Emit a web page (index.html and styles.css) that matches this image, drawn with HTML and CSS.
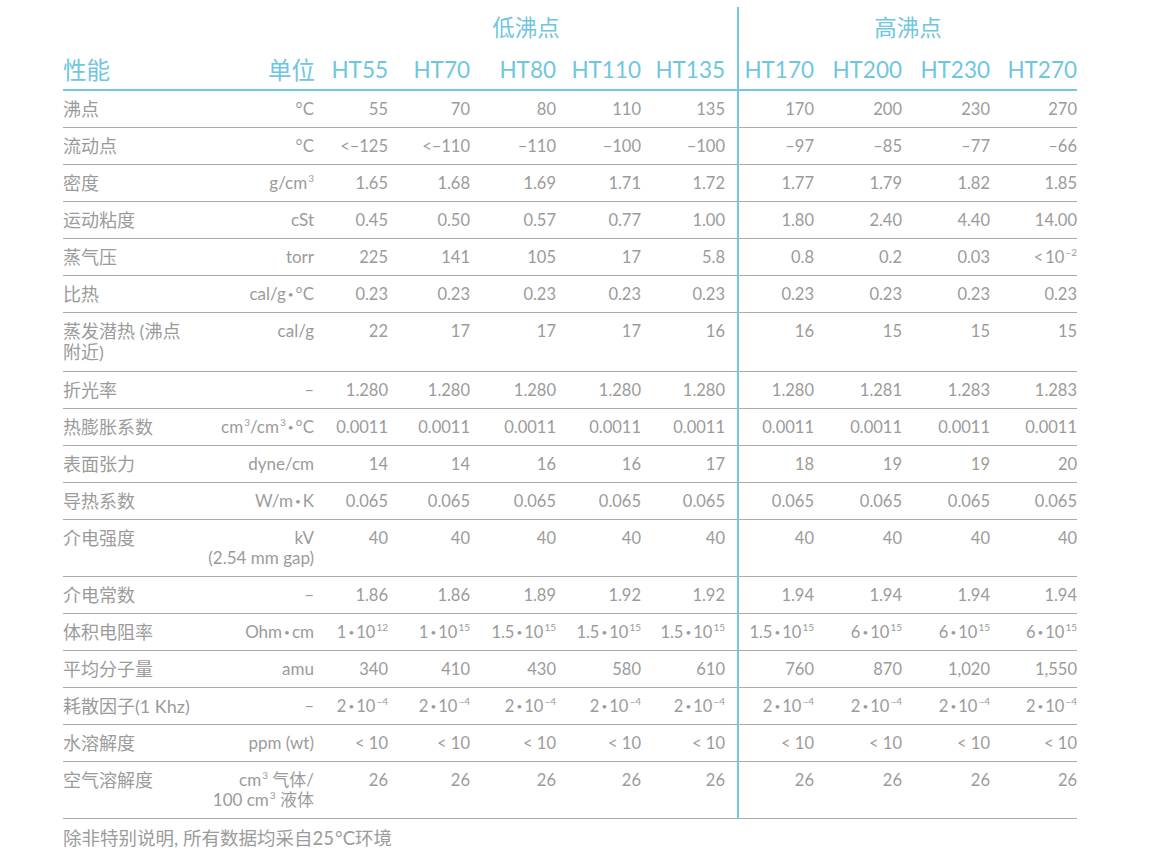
FILE: index.html
```html
<!DOCTYPE html>
<html lang="zh-CN">
<head>
<meta charset="utf-8">
<title>性能</title>
<link rel="stylesheet" href="styles.css">
</head>
<body>
<div class="page">
<table class="spec">
  <colgroup>
    <col class="c-prop"><col class="c-unit">
    <col class="c-55"><col class="c-70"><col class="c-80"><col class="c-110"><col class="c-135">
    <col class="c-170"><col class="c-200"><col class="c-230"><col class="c-270">
  </colgroup>
  <thead>
    <tr class="group-row">
      <th></th><th></th>
      <th colspan="5" class="group">低沸点</th>
      <th colspan="4" class="group hi">高沸点</th>
    </tr>
    <tr class="head-row">
      <th class="prop">性能</th>
      <th class="unit">单位</th>
      <th>HT55</th><th>HT70</th><th>HT80</th><th>HT110</th><th class="last-lo">HT135</th>
      <th class="hi">HT170</th><th>HT200</th><th>HT230</th><th>HT270</th>
    </tr>
  </thead>
  <tbody>
    <tr><td class="prop">沸点</td><td class="unit">°C</td><td>55</td><td>70</td><td>80</td><td>110</td><td class="last-lo">135</td><td class="hi">170</td><td>200</td><td>230</td><td>270</td></tr>
    <tr><td class="prop">流动点</td><td class="unit">°C</td><td>&lt;–125</td><td>&lt;–110</td><td>–110</td><td>–100</td><td class="last-lo">–100</td><td class="hi">–97</td><td>–85</td><td>–77</td><td>–66</td></tr>
    <tr><td class="prop">密度</td><td class="unit">g/cm<sup>3</sup></td><td>1.65</td><td>1.68</td><td>1.69</td><td>1.71</td><td class="last-lo">1.72</td><td class="hi">1.77</td><td>1.79</td><td>1.82</td><td>1.85</td></tr>
    <tr><td class="prop">运动粘度</td><td class="unit">cSt</td><td>0.45</td><td>0.50</td><td>0.57</td><td>0.77</td><td class="last-lo">1.00</td><td class="hi">1.80</td><td>2.40</td><td>4.40</td><td>14.00</td></tr>
    <tr><td class="prop">蒸气压</td><td class="unit">torr</td><td>225</td><td>141</td><td>105</td><td>17</td><td class="last-lo">5.8</td><td class="hi">0.8</td><td>0.2</td><td>0.03</td><td>&lt;&#8201;10<sup>–2</sup></td></tr>
    <tr><td class="prop">比热</td><td class="unit">cal/g<span class="dot">•</span>°C</td><td>0.23</td><td>0.23</td><td>0.23</td><td>0.23</td><td class="last-lo">0.23</td><td class="hi">0.23</td><td>0.23</td><td>0.23</td><td>0.23</td></tr>
    <tr class="tall"><td class="prop">蒸发潜热 (沸点<br>附近)</td><td class="unit">cal/g</td><td>22</td><td>17</td><td>17</td><td>17</td><td class="last-lo">16</td><td class="hi">16</td><td>15</td><td>15</td><td>15</td></tr>
    <tr><td class="prop">折光率</td><td class="unit">–</td><td>1.280</td><td>1.280</td><td>1.280</td><td>1.280</td><td class="last-lo">1.280</td><td class="hi">1.280</td><td>1.281</td><td>1.283</td><td>1.283</td></tr>
    <tr><td class="prop">热膨胀系数</td><td class="unit">cm<sup>3</sup>/cm<sup>3</sup><span class="dot">•</span>°C</td><td>0.0011</td><td>0.0011</td><td>0.0011</td><td>0.0011</td><td class="last-lo">0.0011</td><td class="hi">0.0011</td><td>0.0011</td><td>0.0011</td><td>0.0011</td></tr>
    <tr><td class="prop">表面张力</td><td class="unit">dyne/cm</td><td>14</td><td>14</td><td>16</td><td>16</td><td class="last-lo">17</td><td class="hi">18</td><td>19</td><td>19</td><td>20</td></tr>
    <tr><td class="prop">导热系数</td><td class="unit">W/m<span class="dot">•</span>K</td><td>0.065</td><td>0.065</td><td>0.065</td><td>0.065</td><td class="last-lo">0.065</td><td class="hi">0.065</td><td>0.065</td><td>0.065</td><td>0.065</td></tr>
    <tr><td class="prop">介电强度</td><td class="unit">kV<br>(2.54 mm gap)</td><td>40</td><td>40</td><td>40</td><td>40</td><td class="last-lo">40</td><td class="hi">40</td><td>40</td><td>40</td><td>40</td></tr>
    <tr><td class="prop">介电常数</td><td class="unit">–</td><td>1.86</td><td>1.86</td><td>1.89</td><td>1.92</td><td class="last-lo">1.92</td><td class="hi">1.94</td><td>1.94</td><td>1.94</td><td>1.94</td></tr>
    <tr><td class="prop">体积电阻率</td><td class="unit">Ohm<span class="dot">•</span>cm</td><td>1<span class="dot">•</span>10<sup>12</sup></td><td>1<span class="dot">•</span>10<sup>15</sup></td><td>1.5<span class="dot">•</span>10<sup>15</sup></td><td>1.5<span class="dot">•</span>10<sup>15</sup></td><td class="last-lo">1.5<span class="dot">•</span>10<sup>15</sup></td><td class="hi">1.5<span class="dot">•</span>10<sup>15</sup></td><td>6<span class="dot">•</span>10<sup>15</sup></td><td>6<span class="dot">•</span>10<sup>15</sup></td><td>6<span class="dot">•</span>10<sup>15</sup></td></tr>
    <tr><td class="prop">平均分子量</td><td class="unit">amu</td><td>340</td><td>410</td><td>430</td><td>580</td><td class="last-lo">610</td><td class="hi">760</td><td>870</td><td>1,020</td><td>1,550</td></tr>
    <tr><td class="prop">耗散因子(1 Khz)</td><td class="unit">–</td><td>2<span class="dot">•</span>10<sup>–4</sup></td><td>2<span class="dot">•</span>10<sup>–4</sup></td><td>2<span class="dot">•</span>10<sup>–4</sup></td><td>2<span class="dot">•</span>10<sup>–4</sup></td><td class="last-lo">2<span class="dot">•</span>10<sup>–4</sup></td><td class="hi">2<span class="dot">•</span>10<sup>–4</sup></td><td>2<span class="dot">•</span>10<sup>–4</sup></td><td>2<span class="dot">•</span>10<sup>–4</sup></td><td>2<span class="dot">•</span>10<sup>–4</sup></td></tr>
    <tr><td class="prop">水溶解度</td><td class="unit">ppm (wt)</td><td>&lt; 10</td><td>&lt; 10</td><td>&lt; 10</td><td>&lt; 10</td><td class="last-lo">&lt; 10</td><td class="hi">&lt; 10</td><td>&lt; 10</td><td>&lt; 10</td><td>&lt; 10</td></tr>
    <tr class="tall"><td class="prop">空气溶解度</td><td class="unit">cm<sup>3</sup> 气体/<br>100 cm<sup>3</sup> 液体</td><td>26</td><td>26</td><td>26</td><td>26</td><td class="last-lo">26</td><td class="hi">26</td><td>26</td><td>26</td><td>26</td></tr>
  </tbody>
</table>
<p class="note">除非特别说明, 所有数据均采自25&#8202;°C环境</p>
</div>
</body>
</html>
```

FILE: styles.css
```css
html, body {
  margin: 0;
  padding: 0;
  background: #ffffff;
}

body {
  font-family: "Lato", "Noto Sans CJK SC", sans-serif;
  color: #9b9b9b;
  font-size: 16.5px;
}

.page {
  padding: 7px 0 0 63px;
}

.spec {
  border-collapse: collapse;
  table-layout: fixed;
  width: 1014px;
}

.c-prop { width: 139px; }
.c-unit { width: 113px; }
.c-55 { width: 73px; }
.c-70 { width: 82px; }
.c-80 { width: 86px; }
.c-110 { width: 85px; }
.c-135 { width: 97px; }
.c-170 { width: 76px; }
.c-200 { width: 88px; }
.c-230 { width: 88px; }
.c-270 { width: 87px; }

.spec th {
  font-weight: 400;
  color: #6fc6df;
  padding: 0;
  text-align: right;
  white-space: nowrap;
}

.group-row th {
  font-size: 22.5px;
  line-height: 28px;
  padding: 7px 0;
}

.group-row th.group {
  text-align: center;
}

.head-row th {
  font-size: 22.5px;
  line-height: 28px;
  padding: 7px 0 5px;
  border-bottom: 2px solid #74c8e1;
}

.head-row th.prop,
.head-row th.unit {
  font-size: 23.5px;
}

.head-row th.prop {
  text-align: left;
}

.spec td {
  padding: 8px 0 8px;
  line-height: 20px;
  text-align: right;
  vertical-align: top;
  border-bottom: 1px solid #ababab;
  white-space: nowrap;
}

.spec td.prop {
  text-align: left;
  font-size: 18px;
  padding-right: 0;
}

.spec tr.tall td.prop {
  line-height: 21px;
}

.spec td.unit {
  padding-right: 1px;
  font-size: 17px;
}

.spec .last-lo {
  padding-right: 12px;
}

.spec .hi {
  border-left: 2px solid #74c8e1;
}

sup {
  font-size: 10px;
  line-height: 0;
  vertical-align: 0;
  position: relative;
  top: -7px;
  margin-left: 1px;
}

.dot {
  font-size: 10px;
  display: inline-block;
  vertical-align: 2px;
  margin: 0 2px;
  line-height: 0;
}

.note {
  margin: 9px 0 0;
  font-size: 18.5px;
  line-height: 20px;
}
```
